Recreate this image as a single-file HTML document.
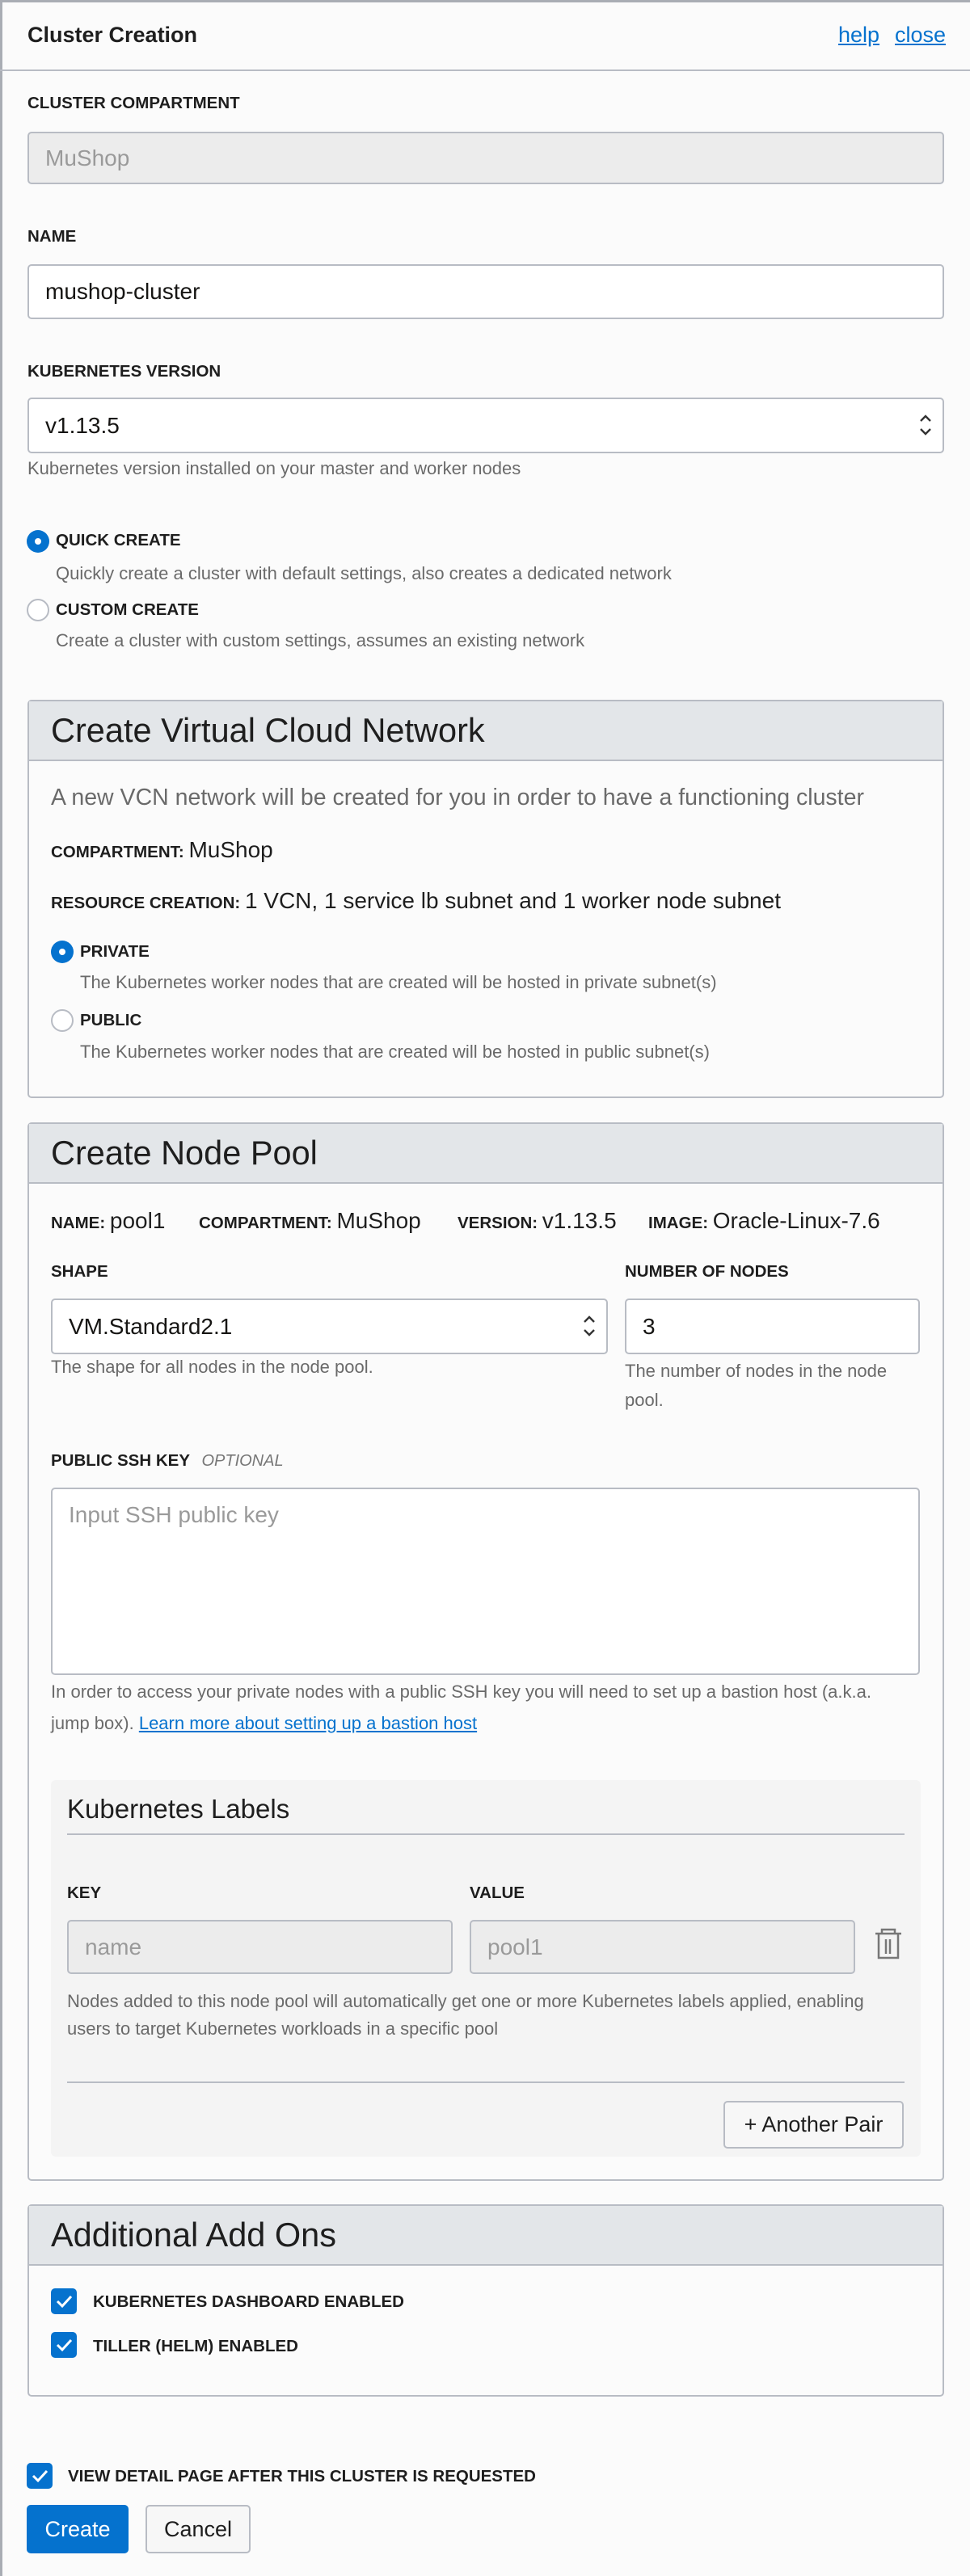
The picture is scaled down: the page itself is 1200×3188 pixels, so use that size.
<!DOCTYPE html>
<html><head><meta charset="utf-8"><style>
*{box-sizing:border-box;margin:0;padding:0}
body{width:1200px;height:3188px;background:#fbfbfb;font-family:"Liberation Sans",Arial,sans-serif;color:#161513;position:relative;overflow:hidden}
.a{position:absolute;white-space:nowrap}
.lbl{font-size:20.5px;font-weight:bold;color:#1e1e1e}
.help{font-size:22px;color:#6a6a6a}
.inp{position:absolute;border:2px solid #b8bcc4;border-radius:5px;background:#fff;font-size:28px;padding-left:20px;display:flex;align-items:center;color:#161513}
.dis{background:#ececec;color:#9a9a9a}
.box{position:absolute;left:34px;width:1134px;border:2px solid #b8bcc4;border-radius:5px;background:#fbfbfb}
.bh{background:#e3e6e9;border-bottom:2px solid #b8bcc4;height:74px;font-size:41.5px;padding-left:27px;display:flex;align-items:center;color:#1e1e1e}
.rad{position:absolute;width:28px;height:28px;border-radius:50%;border:2px solid #b8bcc4;background:#fff}
.rad.on{border:none;background:#0572ce}
.rad.on:after{content:"";position:absolute;left:10px;top:10px;width:8px;height:8px;border-radius:50%;background:#fff}
.cb{position:absolute;width:32px;height:32px;border-radius:5px;background:#0572ce}
.big{font-size:28px;color:#1e1e1e}
</style></head><body>
<div class="a" style="left:0;top:0;width:3px;height:3188px;background:#a9adb4"></div>
<div class="a" style="left:0;top:0;width:1200px;height:3px;background:#a9adb4"></div>
<div class="a" style="left:0;top:86px;width:1200px;height:2px;background:#b8bcc4"></div>
<div class="a" style="left:34px;top:28px;font-size:27px;font-weight:bold;color:#1e1e1e">Cluster Creation</div>
<div class="a" style="left:1037px;top:28px;font-size:27px;color:#0572ce;text-decoration:underline">help</div>
<div class="a" style="left:1107px;top:28px;font-size:27px;color:#0572ce;text-decoration:underline">close</div>

<div class="a lbl" style="left:34px;top:116px">CLUSTER COMPARTMENT</div>
<div class="inp dis" style="left:34px;top:163px;width:1134px;height:65px">MuShop</div>
<div class="a lbl" style="left:34px;top:281px">NAME</div>
<div class="inp" style="left:34px;top:327px;width:1134px;height:68px">mushop-cluster</div>
<div class="a lbl" style="left:34px;top:448px">KUBERNETES VERSION</div>
<div class="inp" style="left:34px;top:492px;width:1134px;height:69px">v1.13.5
<svg style="position:absolute;right:12px;top:18px" width="18" height="28" viewBox="0 0 18 28"><path d="M3 9l6-6 6 6M3 19l6 6 6-6" stroke="#333" stroke-width="2.4" fill="none"/></svg></div>
<div class="a help" style="left:34px;top:567px">Kubernetes version installed on your master and worker nodes</div>

<div class="rad on" style="left:33px;top:656px"></div>
<div class="a lbl" style="left:69px;top:657px">QUICK CREATE</div>
<div class="a help" style="left:69px;top:697px">Quickly create a cluster with default settings, also creates a dedicated network</div>
<div class="rad" style="left:33px;top:741px"></div>
<div class="a lbl" style="left:69px;top:743px">CUSTOM CREATE</div>
<div class="a help" style="left:69px;top:780px">Create a cluster with custom settings, assumes an existing network</div>

<div class="box" style="top:866px;height:493px">
<div class="bh">Create Virtual Cloud Network</div>
</div>
<div class="a" style="left:63px;top:971px;font-size:28.5px;color:#6a6a6a">A new VCN network will be created for you in order to have a functioning cluster</div>
<div class="a" style="left:63px;top:1036px"><span class="lbl">COMPARTMENT: </span><span class="big">MuShop</span></div>
<div class="a" style="left:63px;top:1099px"><span class="lbl">RESOURCE CREATION: </span><span class="big">1 VCN, 1 service lb subnet and 1 worker node subnet</span></div>
<div class="rad on" style="left:63px;top:1164px"></div>
<div class="a lbl" style="left:99px;top:1166px">PRIVATE</div>
<div class="a help" style="left:99px;top:1203px">The Kubernetes worker nodes that are created will be hosted in private subnet(s)</div>
<div class="rad" style="left:63px;top:1249px"></div>
<div class="a lbl" style="left:99px;top:1251px">PUBLIC</div>
<div class="a help" style="left:99px;top:1289px">The Kubernetes worker nodes that are created will be hosted in public subnet(s)</div>

<div class="box" style="top:1389px;height:1310px">
<div class="bh">Create Node Pool</div>
</div>
<div class="a" style="left:63px;top:1495px"><span class="lbl">NAME: </span><span class="big">pool1</span></div>
<div class="a" style="left:246px;top:1495px"><span class="lbl">COMPARTMENT: </span><span class="big">MuShop</span></div>
<div class="a" style="left:566px;top:1495px"><span class="lbl">VERSION: </span><span class="big">v1.13.5</span></div>
<div class="a" style="left:802px;top:1495px"><span class="lbl">IMAGE: </span><span class="big">Oracle-Linux-7.6</span></div>
<div class="a lbl" style="left:63px;top:1562px">SHAPE</div>
<div class="a lbl" style="left:773px;top:1562px">NUMBER OF NODES</div>
<div class="inp" style="left:63px;top:1607px;width:689px;height:69px">VM.Standard2.1
<svg style="position:absolute;right:12px;top:18px" width="18" height="28" viewBox="0 0 18 28"><path d="M3 9l6-6 6 6M3 19l6 6 6-6" stroke="#333" stroke-width="2.4" fill="none"/></svg></div>
<div class="inp" style="left:773px;top:1607px;width:365px;height:69px">3</div>
<div class="a help" style="left:63px;top:1679px">The shape for all nodes in the node pool.</div>
<div class="a help" style="left:773px;top:1679px;line-height:36px;white-space:normal;width:365px">The number of nodes in the node pool.</div>

<div class="a" style="left:63px;top:1796px"><span class="lbl">PUBLIC SSH KEY</span> <span style="font-size:20px;font-style:italic;color:#777;margin-left:10px">OPTIONAL</span></div>
<div class="inp" style="left:63px;top:1841px;width:1075px;height:232px;align-items:flex-start;padding:16px 0 0 20px;color:#9a9a9a">Input SSH public key</div>
<div class="a help" style="left:63px;top:2074px;line-height:39px;white-space:normal;width:1060px">In order to access your private nodes with a public SSH key you will need to set up a bastion host (a.k.a. jump box). <span style="color:#0572ce;text-decoration:underline">Learn more about setting up a bastion host</span></div>

<div class="a" style="left:63px;top:2203px;width:1076px;height:466px;background:#f4f4f4;border-radius:6px"></div>
<div class="a" style="left:83px;top:2220px;font-size:33px;color:#1e1e1e">Kubernetes Labels</div>
<div class="a" style="left:83px;top:2269px;width:1036px;height:2px;background:#b8bcc4"></div>
<div class="a lbl" style="left:83px;top:2331px">KEY</div>
<div class="a lbl" style="left:581px;top:2331px">VALUE</div>
<div class="inp dis" style="left:83px;top:2376px;width:477px;height:67px">name</div>
<div class="inp dis" style="left:581px;top:2376px;width:477px;height:67px">pool1</div>
<svg class="a" style="left:1080px;top:2384px" width="40" height="44" viewBox="0 0 40 44"><path d="M3 9h32M11 9V4h16v5M7 9v30h24V9M16 16v18M21 16v18" stroke="#777" stroke-width="2.5" fill="none"/></svg>
<div class="a help" style="left:83px;top:2460px;line-height:34px;white-space:normal;width:1000px">Nodes added to this node pool will automatically get one or more Kubernetes labels applied, enabling users to target Kubernetes workloads in a specific pool</div>
<div class="a" style="left:83px;top:2576px;width:1036px;height:2px;background:#b8bcc4"></div>
<div class="a" style="left:895px;top:2600px;width:223px;height:59px;border:2px solid #b8bcc4;border-radius:5px;background:#f7f7f7;font-size:27px;display:flex;align-items:center;justify-content:center;color:#1e1e1e">+ Another Pair</div>

<div class="box" style="top:2728px;height:238px">
<div class="bh">Additional Add Ons</div>
</div>
<div class="cb" style="left:63px;top:2832px"><svg width="32" height="32"><path d="M8 16l6 6 11-12" stroke="#fff" stroke-width="3" fill="none"/></svg></div>
<div class="a lbl" style="left:115px;top:2837px">KUBERNETES DASHBOARD ENABLED</div>
<div class="cb" style="left:63px;top:2886px"><svg width="32" height="32"><path d="M8 16l6 6 11-12" stroke="#fff" stroke-width="3" fill="none"/></svg></div>
<div class="a lbl" style="left:115px;top:2892px">TILLER (HELM) ENABLED</div>

<div class="cb" style="left:33px;top:3048px"><svg width="32" height="32"><path d="M8 16l6 6 11-12" stroke="#fff" stroke-width="3" fill="none"/></svg></div>
<div class="a lbl" style="left:84px;top:3053px">VIEW DETAIL PAGE AFTER THIS CLUSTER IS REQUESTED</div>
<div class="a" style="left:33px;top:3100px;width:126px;height:60px;background:#0572ce;border-radius:5px;color:#fff;font-size:27px;display:flex;align-items:center;justify-content:center">Create</div>
<div class="a" style="left:180px;top:3100px;width:130px;height:60px;background:#f7f7f7;border:2px solid #b8bcc4;border-radius:5px;color:#1e1e1e;font-size:27px;display:flex;align-items:center;justify-content:center">Cancel</div>
</body></html>
